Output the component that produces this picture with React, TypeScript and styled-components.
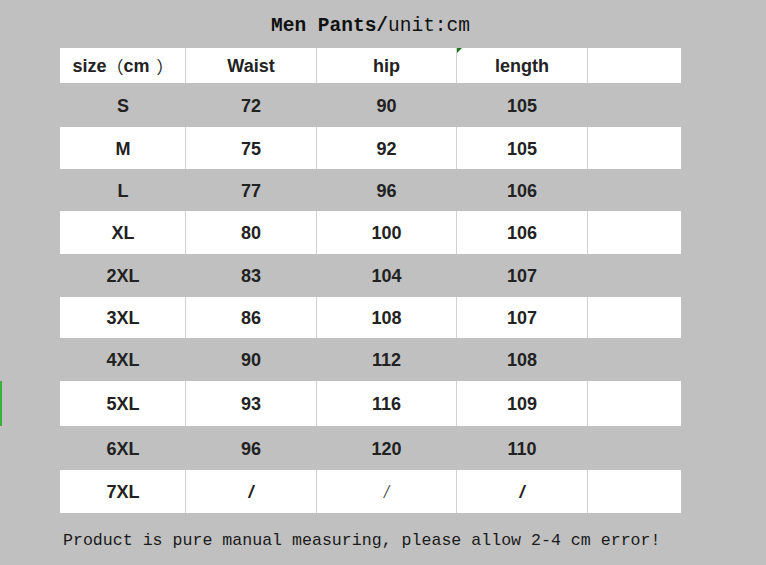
import React from "react";
import styled, { createGlobalStyle } from "styled-components";

const Global = createGlobalStyle`
  html, body { margin: 0; padding: 0; background: #c0c0c0; }
  body { width: 766px; height: 565px; overflow: hidden; }
`;

const Page = styled.div`
  position: relative;
  width: 766px;
  height: 565px;
  background: #c0c0c0;
  display: flex;
  flex-direction: column;
`;

const Title = styled.div`
  height: 48px;
  margin-left: 60px;
  width: 621px;
  box-sizing: border-box;
  padding-top: 3px;
  display: flex;
  align-items: center;
  justify-content: center;
  font-family: "Liberation Mono", "Courier New", monospace;
  font-size: 19.5px;
  color: #111;
`;

const Bold = styled.span`
  font-weight: bold;
`;

const Table = styled.div`
  margin-left: 60px;
  width: 621px;
  display: flex;
  flex-direction: column;
`;

const Row = styled.div<{ $white: boolean; $h: number }>`
  display: grid;
  grid-template-columns: 125px 131px 140px 131px 94px;
  height: ${(p) => p.$h}px;
  background: ${(p) => (p.$white ? "#ffffff" : "transparent")};
`;

const Cell = styled.div<{ $line: boolean }>`
  position: relative;
  display: flex;
  align-items: center;
  justify-content: center;
  padding-top: 2px;
  font-family: "Liberation Sans", Arial, "Noto Sans CJK SC", sans-serif;
  font-weight: bold;
  font-size: 18px;
  color: #222;
  box-sizing: border-box;
  border-left: ${(p) => (p.$line ? "1px solid #d2d2d2" : "1px solid transparent")};
`;

const Paren = styled.span<{ $close?: boolean }>`
  font-family: "Noto Sans CJK SC", sans-serif;
  font-weight: normal;
  font-size: 17px;
  margin-left: ${(p) => (p.$close ? "7px" : "0")};
`;

const Marker = styled.span`
  position: absolute;
  left: 0;
  top: 0;
  width: 0;
  height: 0;
  border-top: 5px solid #1a7a1a;
  border-right: 5px solid transparent;
`;

const Slash = styled.span<{ $thin?: boolean }>`
  font-weight: ${(p) => (p.$thin ? "normal" : "bold")};
  font-style: italic;
  font-family: ${(p) => (p.$thin ? '"Liberation Serif", serif' : '"Liberation Sans", sans-serif')};
`;

const Footer = styled.div`
  height: 52px;
  box-sizing: border-box;
  padding-top: 3px;
  display: flex;
  align-items: center;
  padding-left: 63px;
  font-family: "Liberation Mono", "Courier New", monospace;
  font-size: 16.6px;
  color: #1a1a1a;
`;

const SideMark = styled.div`
  position: absolute;
  left: 0;
  top: 381px;
  width: 2px;
  height: 45px;
  background: #3cae3c;
`;

type R = { size: string; w: React.ReactNode; h: React.ReactNode; l: React.ReactNode; ht: number };

const rows: R[] = [
  { size: "S", w: "72", h: "90", l: "105", ht: 44 },
  { size: "M", w: "75", h: "92", l: "105", ht: 42 },
  { size: "L", w: "77", h: "96", l: "106", ht: 42 },
  { size: "XL", w: "80", h: "100", l: "106", ht: 43 },
  { size: "2XL", w: "83", h: "104", l: "107", ht: 43 },
  { size: "3XL", w: "86", h: "108", l: "107", ht: 41 },
  { size: "4XL", w: "90", h: "112", l: "108", ht: 43 },
  { size: "5XL", w: "93", h: "116", l: "109", ht: 45 },
  { size: "6XL", w: "96", h: "120", l: "110", ht: 44 },
  {
    size: "7XL",
    w: <Slash>/</Slash>,
    h: <Slash $thin>/</Slash>,
    l: <Slash>/</Slash>,
    ht: 43,
  },
];

export default function App() {
  return (
    <Page>
      <Global />
      <SideMark />
      <Title>
        <Bold>Men Pants/</Bold>unit:cm
      </Title>
      <Table>
        <Row $white $h={35}>
          <Cell $line={false}>
            size<Paren>（</Paren>cm<Paren $close>）</Paren>
          </Cell>
          <Cell $line>Waist</Cell>
          <Cell $line>hip</Cell>
          <Cell $line>
            <Marker />
            length
          </Cell>
          <Cell $line></Cell>
        </Row>
        {rows.map((r, i) => {
          const white = i % 2 === 1;
          return (
            <Row key={r.size} $white={white} $h={r.ht}>
              <Cell $line={false}>{r.size}</Cell>
              <Cell $line={white}>{r.w}</Cell>
              <Cell $line={white}>{r.h}</Cell>
              <Cell $line={white}>{r.l}</Cell>
              <Cell $line={white}></Cell>
            </Row>
          );
        })}
      </Table>
      <Footer>Product is pure manual measuring, please allow 2-4 cm error!</Footer>
    </Page>
  );
}
